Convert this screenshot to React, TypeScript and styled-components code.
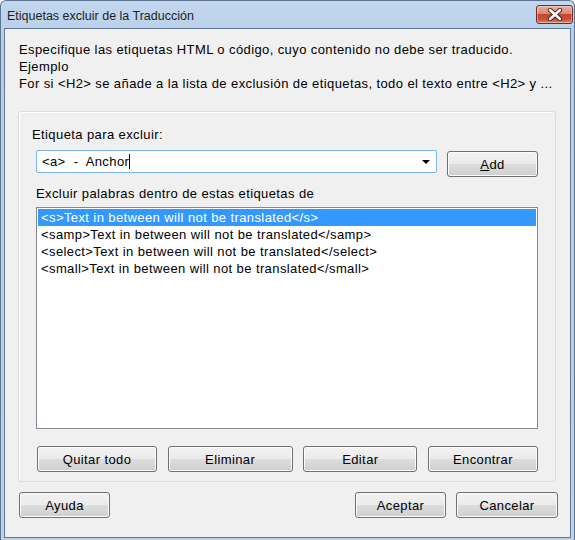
import styled, { createGlobalStyle } from "styled-components";

const GlobalStyle = createGlobalStyle`
  html, body {
    margin: 0;
    padding: 0;
  }
  body {
    font-family: "Liberation Sans", Arial, sans-serif;
    font-size: 13px;
    letter-spacing: 0.4px;
    color: #000;
  }
`;

const tags = [
  "<s>Text in between will not be translated</s>",
  "<samp>Text in between will not be translated</samp>",
  "<select>Text in between will not be translated</select>",
  "<small>Text in between will not be translated</small>",
];

export default function App() {
  return (
    <>
      <GlobalStyle />
      <Window>
        <TitleBar>
          <Title>Etiquetas excluir de la Traducción</Title>
          <CloseButton aria-label="Cerrar">
            <svg width="16" height="13" viewBox="0 0 16 13">
              <path
                d="M3 2 L13 11 M13 2 L3 11"
                stroke="#4a2018"
                strokeWidth="4.4"
                strokeLinecap="round"
              />
              <path
                d="M3 2 L13 11 M13 2 L3 11"
                stroke="#ffffff"
                strokeWidth="2.6"
                strokeLinecap="round"
              />
            </svg>
          </CloseButton>
        </TitleBar>

        <Client>
          <Intro>
            <p>Especifique las etiquetas HTML o código, cuyo contenido no debe ser traducido.</p>
            <p>Ejemplo</p>
            <p>For si &lt;H2&gt; se añade a la lista de exclusión de etiquetas, todo el texto entre &lt;H2&gt; y ...</p>
          </Intro>

          <GroupBox>
            <FieldLabel $shift={-4}>Etiqueta para excluir:</FieldLabel>
            <ComboRow>
              <Combo>
                <ComboText>
                  &lt;a&gt;&nbsp; -&nbsp; Anchor<Caret />
                </ComboText>
                <DropArrow />
              </Combo>
              <Button $width={91} $offset={1}>
                <u>A</u>dd
              </Button>
            </ComboRow>

            <FieldLabel>Excluir palabras dentro de estas etiquetas de</FieldLabel>
            <ListBox>
              {tags.map((tag, i) => (
                <ListItem key={tag} $selected={i === 0}>
                  {tag}
                </ListItem>
              ))}
            </ListBox>

            <ActionRow>
              <Button $width={120}>Quitar todo</Button>
              <Button $width={125}>Eliminar</Button>
              <Button $width={114}>Editar</Button>
              <Button $width={110}>Encontrar</Button>
            </ActionRow>
          </GroupBox>

          <Footer>
            <Button $width={91}>Ayuda</Button>
            <FooterRight>
              <Button $width={91}>Aceptar</Button>
              <Button $width={102}>Cancelar</Button>
            </FooterRight>
          </Footer>
        </Client>
      </Window>
    </>
  );
}

const Window = styled.div`
  width: 575px;
  height: 540px;
  box-sizing: border-box;
  display: flex;
  flex-direction: column;
  padding: 0 3px 2px 3px;
  background: linear-gradient(180deg, #c3d7ee 0%, #b7cee9 40px, #bcd2ea 100%);
  border-left: 1px solid #5d7590;
  border-top: 1px solid #5d7590;
  border-right: 1px solid #5d7590;
  border-radius: 6px 6px 0 0;
  overflow: hidden;
`;

const TitleBar = styled.div`
  height: 27px;
  flex-shrink: 0;
  display: flex;
  align-items: flex-start;
  justify-content: space-between;
`;

const Title = styled.div`
  padding: 8px 0 0 3px;
  font-size: 12.5px;
  letter-spacing: 0;
  color: #1e1e1e;
`;

const CloseButton = styled.div`
  width: 37px;
  height: 19px;
  margin: 4px -2px 0 0;
  box-sizing: border-box;
  display: flex;
  align-items: center;
  justify-content: center;
  border: 1px solid #6e2d22;
  border-radius: 3px;
  background: linear-gradient(
    180deg,
    #eab0a3 0%,
    #d98872 45%,
    #c5452c 50%,
    #c9543a 80%,
    #dd8a6a 100%
  );
  box-shadow: inset 0 0 0 1px rgba(255, 255, 255, 0.35);
`;

const Client = styled.div`
  flex: 1;
  display: flex;
  flex-direction: column;
  background: #f0f0f0;
  border: 1px solid #5f7a98;
  padding: 12px 14px 0 13px;
`;

const Intro = styled.div`
  padding-left: 1px;
  p {
    margin: 0;
    line-height: 17px;
    white-space: nowrap;
  }
`;

const GroupBox = styled.div`
  margin-top: 19px;
  height: 371px;
  box-sizing: border-box;
  display: flex;
  flex-direction: column;
  padding: 14px 17px 0 17px;
  border: 1px solid #d5dfe5;
  border-radius: 3px;
  box-shadow: inset 1px 1px 0 #ffffff;
`;

const FieldLabel = styled.div<{ $shift?: number }>`
  line-height: 17px;
  margin-left: ${(p) => p.$shift ?? 0}px;
`;

const ComboRow = styled.div`
  display: flex;
  align-items: flex-start;
  gap: 10px;
  margin: 7px 0 8px 0;
`;

const Combo = styled.div`
  flex: 1;
  height: 23px;
  box-sizing: border-box;
  display: flex;
  align-items: center;
  justify-content: space-between;
  background: #fff;
  border: 1px solid #7eb4ea;
  border-radius: 2px;
  padding: 0 6px 0 5px;
`;

const ComboText = styled.span`
  display: flex;
  align-items: center;
  white-space: pre;
`;

const Caret = styled.span`
  display: inline-block;
  width: 1px;
  height: 15px;
  background: #000;
`;

const DropArrow = styled.span`
  width: 0;
  height: 0;
  border-left: 4px solid transparent;
  border-right: 4px solid transparent;
  border-top: 4px solid #000;
`;

const ListBox = styled.div`
  margin-top: 5px;
  height: 222px;
  box-sizing: border-box;
  background: #fff;
  border: 1px solid #828790;
  padding: 1px;
`;

const ListItem = styled.div<{ $selected?: boolean }>`
  height: 17px;
  line-height: 18px;
  padding-left: 3px;
  white-space: nowrap;
  background: ${(p) => (p.$selected ? "#3399ff" : "transparent")};
  color: ${(p) => (p.$selected ? "#fff" : "#000")};
`;

const ActionRow = styled.div`
  display: flex;
  justify-content: space-between;
  margin-top: 17px;
  padding-left: 1px;
`;

const Button = styled.div<{ $width: number; $offset?: number }>`
  width: ${(p) => p.$width}px;
  height: 26px;
  margin-top: ${(p) => p.$offset ?? 0}px;
  box-sizing: border-box;
  display: flex;
  align-items: center;
  justify-content: center;
  flex-shrink: 0;
  border: 1px solid #707070;
  border-radius: 3px;
  background: linear-gradient(
    180deg,
    #f2f2f2 0%,
    #ebebeb 50%,
    #dddddd 50%,
    #cfcfcf 100%
  );
  box-shadow: inset 0 0 0 1px #fcfcfc;
  color: #000;
  u {
    text-decoration: underline;
  }
`;

const Footer = styled.div`
  display: flex;
  justify-content: space-between;
  margin-top: 10px;
  padding: 0 0 0 1px;
  margin-right: -2px;
`;

const FooterRight = styled.div`
  display: flex;
  gap: 10px;
`;
